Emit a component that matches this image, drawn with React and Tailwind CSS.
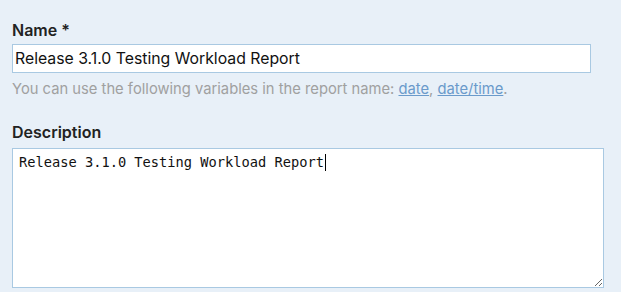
export default function App() {
  return (
    <div className="w-[621px] h-[292px] bg-[#e8f0f8] px-3 pt-[20px] overflow-hidden font-['Inter','Roboto',sans-serif]">
      <label className="block text-[16px] leading-[20px] font-semibold text-[#222]">
        Name *
      </label>
      <input
        className="mt-[4px] block w-[579px] h-[29px] bg-white border border-[#a9c9e2] px-[2px] text-[15.8px] text-[#111] outline-none"
        defaultValue="Release 3.1.0 Testing Workload Report"
      />
      <p className="mt-[6px] text-[14.75px] leading-[20px] text-[#a0a0a0]">
        You can use the following variables in the report name:{" "}
        <a href="#" className="text-[#6a9acb] underline">date</a>,{" "}
        <a href="#" className="text-[#6a9acb] underline">date/time</a>.
      </p>
      <label className="mt-[23px] block text-[16px] leading-[20px] font-semibold text-[#222]">
        Description
      </label>
      <div className="relative mt-[6px]">
        <textarea
          className="block w-[592px] h-[140px] bg-white border border-[#a9c9e2] px-[6px] py-[4px] text-[13.7px] leading-[18px] text-[#111] font-['DejaVu_Sans_Mono',monospace] outline-none"
          defaultValue="Release 3.1.0 Testing Workload Report"
        />
        <span className="absolute left-[313px] top-[6px] w-px h-[17px] bg-black" />
      </div>
    </div>
  );
}
